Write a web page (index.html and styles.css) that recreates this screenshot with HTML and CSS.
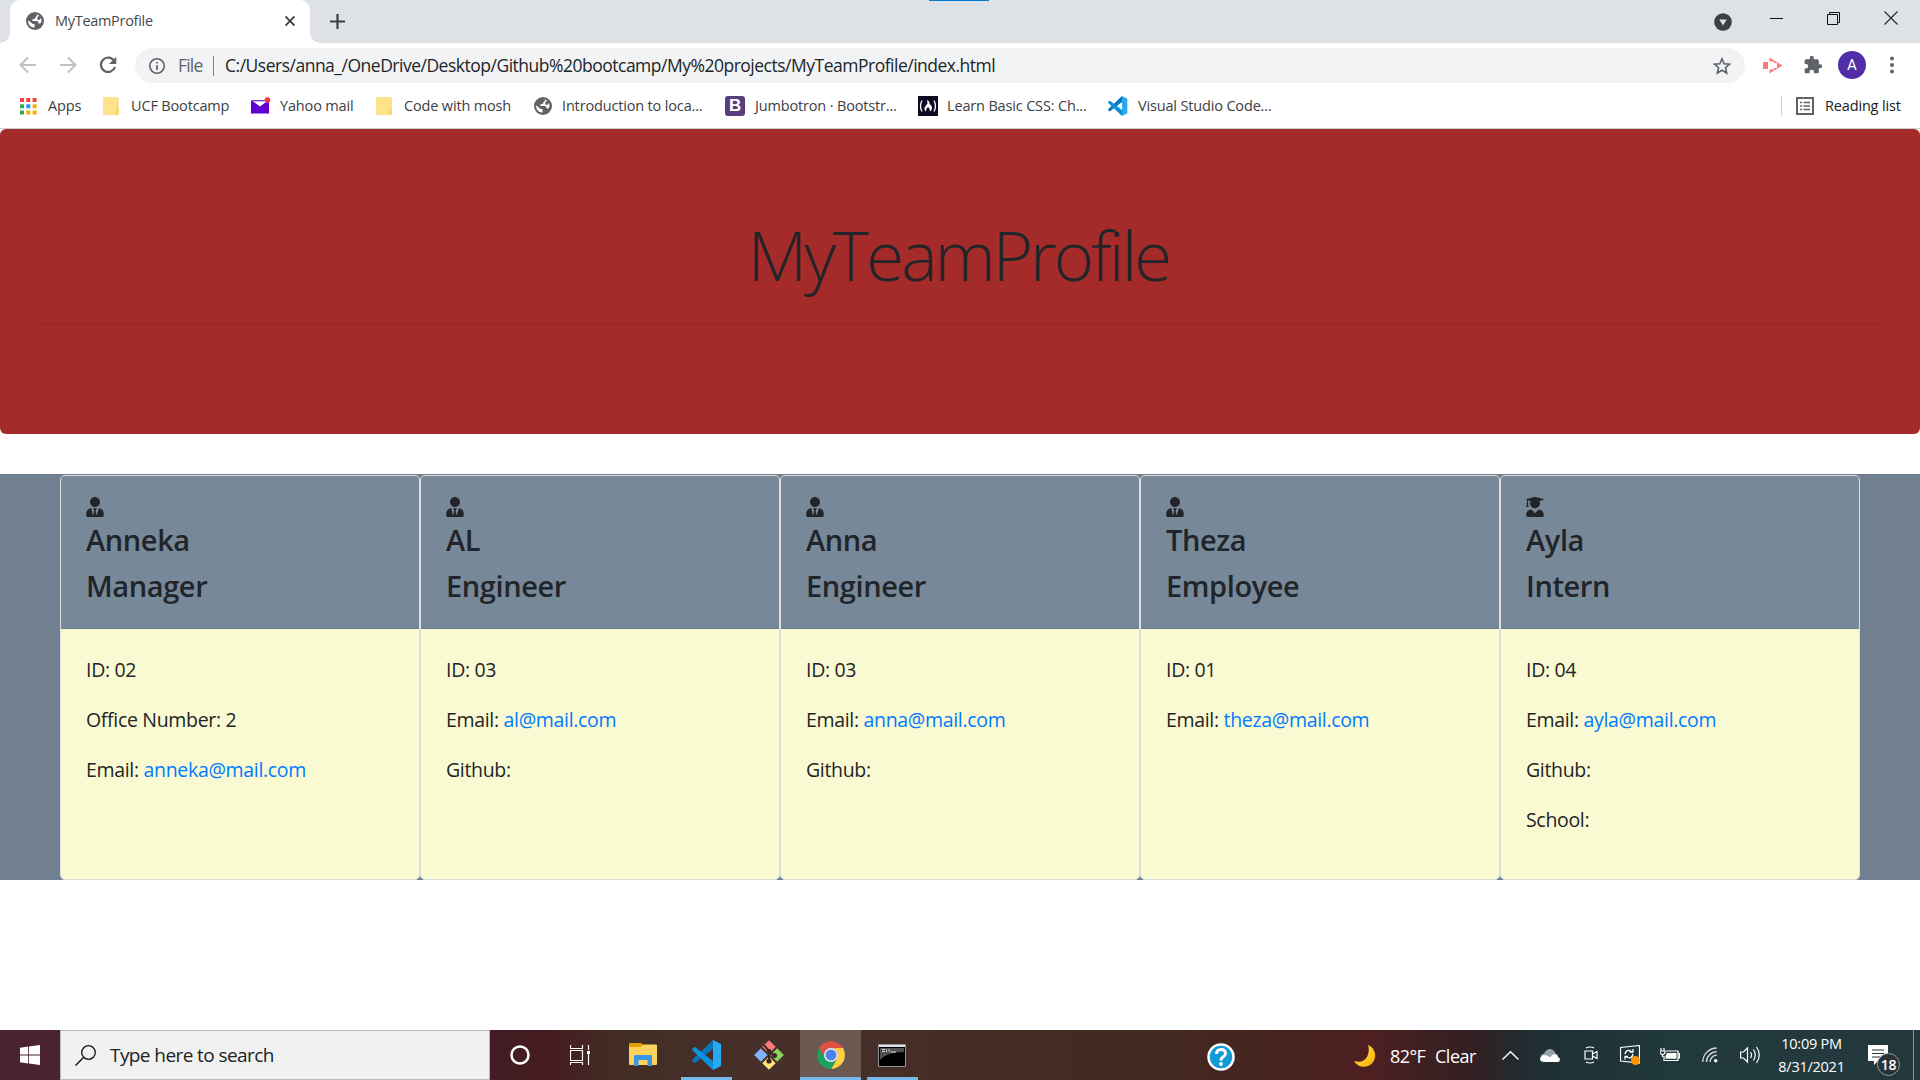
FILE: index.html
```html
<!DOCTYPE html>
<html lang="en">
<head>
<meta charset="utf-8">
<title>MyTeamProfile</title>
<link rel="stylesheet" href="styles.css">
</head>
<body>
<svg width="0" height="0" class="defs">
  <symbol id="globe" viewBox="0 0 18 18"><circle cx="9" cy="9" r="9" fill="#5f6368"/><path d="M2.200 8.200L6 11.500Q7 12 8.500 12V15.500Q4.500 15.500 2.700 12Q2 10.500 2.200 8.200ZM8 2.300H11.200Q11.300 4.800 9.300 5.300L8.800 7H6.500V9H11Q12.700 9.200 12.700 11.500H14.500Q16.200 9 15 5.800L13.700 7.800H11.300V5.500L13 3.500Q11 2 8 2.300Z" fill="#fff"/></symbol>
  <symbol id="folder" viewBox="0 0 16 18"><path d="M1 0H14Q15 0 15 1V12Q16 13 16 15V16Q16 18 14 18H1Q0 18 0 17V1Q0 0 1 0Z" fill="#ffe38c"/><path d="M15 1V12M13 18V14Q13 12 15 12Q16 13 15.500 16.500Q15 17.500 13 17.500" fill="none" stroke="#f5cf52"/></symbol>
  <symbol id="code" viewBox="0 0 30 30"><path d="M21 0L29 4V26L21 30Z" fill="#29a9f2"/><path d="M21 0V9L3 23Q2 23.500 0 21L1 19Z" fill="#0875bd"/><path d="M3 7Q1.500 7 0 9L1 11 21 30V21Z" fill="#0a91dc"/></symbol>
  <symbol id="tie" viewBox="0 0 448 512"><path fill="#212529" d="M224 256c70.700 0 128-57.300 128-128S294.700 0 224 0 96 57.300 96 128s57.300 128 128 128zm95.800 32.600L272 480l-32-136 32-56h-96l32 56-32 136-47.800-191.400C56.900 292 0 350.300 0 422.400V464c0 26.500 21.500 48 48 48h352c26.500 0 48-21.500 48-48v-41.600c0-72.100-56.900-130.400-128.200-133.800z"/></symbol>
  <symbol id="graduate" viewBox="0 0 448 512"><path fill="#212529" d="M319.400 320.600L224 416l-95.400-95.400C57.100 323.700 0 382.200 0 454.400v9.600c0 26.500 21.500 48 48 48h352c26.500 0 48-21.500 48-48v-9.600c0-72.200-57.100-130.700-128.600-133.800zM13.600 79.800l6.400 1.500v58.400c-7 4.200-12 11.500-12 20.300 0 8.400 4.600 15.400 11.100 19.700L3.500 242c-1.700 6.900 2.100 14 7.600 14h41.800c5.500 0 9.300-7.100 7.600-14l-15.600-62.300C51.400 175.400 56 168.400 56 160c0-8.800-5-16.100-12-20.300V87.100l66 15.900c-8.600 17.200-14 36.400-14 57 0 70.700 57.300 128 128 128s128-57.300 128-128c0-20.600-5.300-39.800-14-57l96.300-23.200c18.200-4.400 18.200-27.100 0-31.500l-190.400-46c-13-3.100-26.700-3.100-39.700 0L13.600 48.200c-18.100 4.400-18.100 27.200 0 31.600z"/></symbol>
</svg>

<header class="browser">
  <div class="tabstrip">
    <div class="tab">
      <svg class="globe"><use href="#globe"/></svg><span class="tab-title">MyTeamProfile</span>
      <svg class="close" viewBox="0 0 10 10"><path d="M0.500 0.500L9.500 9.500M9.500 0.500L0.500 9.500" stroke="#3c4043" stroke-width="1.900"/></svg>
    </div>
    <svg class="plus" viewBox="0 0 15 15"><path d="M7.500 0V15M0 7.500H15" stroke="#3c4043" stroke-width="2.200"/></svg>
    <div class="snap-edge"><i></i></div>
    <div class="window-controls">
      <svg width="18" height="18" viewBox="0 0 18 18"><circle cx="9" cy="9" r="8.800" fill="#3c4043"/><path d="M5.200 6.500H12.800L9 12.500Z" fill="#dee1e6"/></svg>
      <svg width="14" height="14" viewBox="0 0 14 14"><path d="M0 7.500H13" stroke="#111"/></svg>
      <svg width="14" height="14" viewBox="0 0 14 14"><path d="M.5 3.500H10.500V13.500H.5ZM2.500 3.500V1.500H12.500V11.500H10.500" fill="none" stroke="#111"/></svg>
      <svg width="14" height="14" viewBox="0 0 14 14"><path d="M.5.500L13.500 13.500M13.500.500L.5 13.500" stroke="#222" stroke-width="1.100"/></svg>
    </div>
  </div>

  <div class="toolbar">
    <svg class="nav" viewBox="0 0 18 18"><path d="M17 9H2M9 1.500L1.500 9 9 16.500" fill="none" stroke="#bdc0c4" stroke-width="2"/></svg>
    <svg class="nav" viewBox="0 0 18 18"><path d="M1 9H16M9 1.500L16.500 9 9 16.500" fill="none" stroke="#bdc0c4" stroke-width="2"/></svg>
    <svg class="nav" viewBox="0 0 18 18"><path d="M15 4.500A7.200 7.200 0 1 0 16 11" fill="none" stroke="#5f6368" stroke-width="2.200"/><path d="M17.300.700V8H10Z" fill="#5f6368"/></svg>
    <div class="omnibox">
      <svg class="info" viewBox="0 0 16 16"><circle cx="8" cy="8" r="7.200" fill="none" stroke="#5f6368" stroke-width="1.600"/><path d="M8 7V12M8 4V5.600" stroke="#5f6368" stroke-width="1.700"/></svg>
      <span class="scheme">File</span><i class="bar"></i><span class="url">C:/Users/anna_/OneDrive/Desktop/Github%20bootcamp/My%20projects/MyTeamProfile/index.html</span>
      <svg class="star" viewBox="0 0 18 18"><path d="M9 1.800L11.100 6.800 16.500 7.200 12.400 10.700 13.700 16 9 13.200 4.300 16 5.600 10.700 1.500 7.200 6.900 6.800Z" fill="none" stroke="#5f6368" stroke-width="1.600"/></svg>
    </div>
    <div class="actions">
      <svg width="20" height="17" viewBox="0 0 20 17"><path d="M0 5H5V12H0Z" fill="#ff7b7b"/><path d="M6.500 0.500L19.500 8.500 6.500 16.500V12.500H11V11H14V6H11V4.500H6.500Z" fill="#ff7b7b"/></svg>
      <svg width="20" height="20" viewBox="0 0 24 24"><path fill="#5f6368" d="M20.500 11H19V7c0-1.100-.9-2-2-2h-4V3.500a2.500 2.500 0 0 0-5 0V5H4c-1.100 0-2 .9-2 2v3.800h1.500a2.700 2.700 0 0 1 0 5.400H2V20c0 1.100.9 2 2 2h3.800v-1.500a2.700 2.700 0 0 1 5.400 0V22H17c1.100 0 2-.9 2-2v-4h1.500a2.500 2.500 0 0 0 0-5z"/></svg>
      <span class="avatar">A</span>
      <svg width="4" height="18" viewBox="0 0 4 18"><g fill="#5f6368"><circle cx="2" cy="2.500" r="2"/><circle cx="2" cy="9" r="2"/><circle cx="2" cy="15.500" r="2"/></g></svg>
    </div>
  </div>

  <nav class="bookmarks">
    <a class="bm apps"><svg width="17" height="17" viewBox="0 0 17 17"><path fill="#f44336" d="M0 0h4v4H0zM6.300 0h4v4h-4zM12.600 0h4v4h-4z"/><path fill="#34a853" d="M0 6.300h4v4H0zM0 12.600h4v4H0z"/><path fill="#2196f3" d="M6.300 6.300h4v4h-4z"/><path fill="#fbab09" d="M12.600 6.300h4v4h-4zM6.300 12.600h4v4h-4zM12.600 12.600h4v4h-4z"/></svg><span>Apps</span></a>
    <a class="bm ucf"><svg width="16" height="18"><use href="#folder"/></svg><span>UCF Bootcamp</span></a>
    <a class="bm yahoo"><svg width="20" height="18" viewBox="0 0 20 18"><path d="M0 3.500H18V16.500H0Z" fill="#6001d2"/><path d="M1.500 4L9 9.500 16.500 4V3.500H1.500Z" fill="#fff"/><path d="M1 3.800H17" stroke="#6001d2" stroke-width="1"/><circle cx="16.500" cy="3" r="2.800" fill="#ff333a"/></svg><span>Yahoo mail</span></a>
    <a class="bm mosh"><svg width="16" height="18"><use href="#folder"/></svg><span>Code with mosh</span></a>
    <a class="bm intro"><svg width="18" height="18"><use href="#globe"/></svg><span>Introduction to loca...</span></a>
    <a class="bm jumbo"><b class="bs-icon">B</b><span>Jumbotron · Bootstr...</span></a>
    <a class="bm learn"><svg width="20" height="20" viewBox="0 0 20 20"><path fill="#0a0a23" d="M0 0H20V20H0Z"/><path d="M4 4.500Q1 10 4 15.500M16 4.500Q19 10 16 15.500" fill="none" stroke="#fff" stroke-width="1.300"/><path d="M9 4Q12 5 11.500 8 14 9 14 12 14 14 12 15.500 12 12 10 11 8 12 8 15.500 6 14 6.500 11.500L9.500 7.500Z" fill="#fff"/></svg><span>Learn Basic CSS: Ch...</span></a>
    <a class="bm vsc"><svg width="20" height="20"><use href="#code"/></svg><span>Visual Studio Code...</span></a>
    <a class="bm reading"><svg width="18" height="18" viewBox="0 0 18 18"><path d="M1 1H17V17H1Z" fill="none" stroke="#5f6368" stroke-width="2"/><path d="M4 5.500H6M4 9H6M4 12.500H6M7.500 5.500H14M7.500 9H14M7.500 12.500H14" stroke="#5f6368" stroke-width="1.600"/></svg><span>Reading list</span></a>
  </nav>
</header>

<main>
  <section class="jumbotron"><h1>MyTeamProfile</h1><hr></section>
  <section class="team">
    <article class="card"><header><svg><use href="#tie"/></svg><h2>Anneka</h2><h2>Manager</h2></header><div class="body"><p>ID: 02</p><p>Office Number: 2</p><p>Email: <a>anneka@mail.com</a></p></div></article>
    <article class="card"><header><svg><use href="#tie"/></svg><h2>AL</h2><h2>Engineer</h2></header><div class="body"><p>ID: 03</p><p>Email: <a>al@mail.com</a></p><p>Github:</p></div></article>
    <article class="card"><header><svg><use href="#tie"/></svg><h2>Anna</h2><h2>Engineer</h2></header><div class="body"><p>ID: 03</p><p>Email: <a>anna@mail.com</a></p><p>Github:</p></div></article>
    <article class="card"><header><svg><use href="#tie"/></svg><h2>Theza</h2><h2>Employee</h2></header><div class="body"><p>ID: 01</p><p>Email: <a>theza@mail.com</a></p></div></article>
    <article class="card"><header><svg><use href="#graduate"/></svg><h2>Ayla</h2><h2>Intern</h2></header><div class="body"><p>ID: 04</p><p>Email: <a>ayla@mail.com</a></p><p>Github:</p><p>School:</p></div></article>
  </section>
</main>

<footer class="taskbar">
  <div class="start"><svg width="20" height="20" viewBox="0 0 20 20"><path fill="#fff" d="M0 2.800L8.200 1.600V9.500H0ZM9 1.500L20 0V9.500H9ZM0 10.400H8.200V18.400L0 17.200ZM9 10.400H20V20L9 18.500Z"/></svg></div>
  <div class="search"><svg width="21" height="21" viewBox="0 0 21 21"><circle cx="13.500" cy="7.500" r="6.800" fill="none" stroke="#111" stroke-width="1.300"/><path d="M8.500 12.500L.5 20.500" stroke="#111" stroke-width="1.400"/></svg><span>Type here to search</span></div>
  <div class="pins">
    <div class="pin w60"><svg width="20" height="20" viewBox="0 0 20 20"><circle cx="10" cy="10" r="8.500" fill="none" stroke="#fff" stroke-width="2.500"/></svg></div>
    <div class="pin w60"><svg width="20" height="20" viewBox="0 0 20 20"><path d="M.5 0V3.500H12.500V0M.5 5.500H12.500V15.500H.5ZM.5 20V17.500H12.500V20M18.500 0V5M18.500 9V20" fill="none" stroke="#fff" stroke-width="1.200"/><path d="M17 6H20V9H17Z" fill="#fff"/></svg></div>
    <div class="pin w66"><svg width="28" height="24" viewBox="0 0 28 24"><path d="M0 1Q0 0 1 0H12L14 1.500V5H0Z" fill="#e5a000"/><path d="M0 4H12L14 1.500H27Q28 1.500 28 2.500V21Q28 22 27 22H1Q0 22 0 21Z" fill="#ffd35c"/><path d="M5 23V13Q5 12 6 12H22Q23 12 23 13V23H18.500V17H9.500V23Z" fill="#3997e3"/></svg></div>
    <div class="pin w61 open inset"><svg width="30" height="30"><use href="#code"/></svg></div>
    <div class="pin w63"><svg width="30" height="30" viewBox="0 0 30 30"><g transform="rotate(45 15 15)"><path d="M4.500 4.500H14V14H4.500Z" fill="#ff7b7b"/><path d="M16 4.500H25.500V14H16Z" fill="#8bd45f"/><path d="M4.500 16H14V25.500H4.500Z" fill="#80b3ff"/><path d="M16 16H25.500V25.500H16Z" fill="#ffe57a"/></g><path d="M10 5L15 11V22M15 11L20 16" fill="none" stroke="#3a2b25" stroke-width="2"/><g fill="#3a2b25"><circle cx="15" cy="11" r="2.300"/><circle cx="15" cy="21" r="2.600"/><circle cx="20.500" cy="15.500" r="2.500"/></g></svg></div>
    <div class="pin w61 open active"><svg width="28" height="28" viewBox="0 0 28 28"><path d="M1.900 7A14 14 0 0 1 26.100 7H14A7 7 0 0 0 7.900 17.500Z" fill="#de5246"/><path d="M26.100 7A14 14 0 0 1 14 28L20.100 17.500A7 7 0 0 0 14 7Z" fill="#ffce44"/><path d="M14 28A14 14 0 0 1 1.900 7L7.900 17.500A7 7 0 0 0 20.100 17.500Z" fill="#1aa260"/><circle cx="14" cy="14" r="7" fill="#f1f1f1"/><circle cx="14" cy="14" r="5.500" fill="#4a83ee"/></svg></div>
    <div class="pin w61 open cmd"><svg width="28" height="23" viewBox="0 0 28 23"><path d="M.5.500H27.500V22.500H.5Z" fill="#000" stroke="#8f979c"/><path d="M1 1H27V3H1Z" fill="#dbe4e9"/><path d="M2 4H26V8Q9 8 2 16Z" fill="#505050"/><path d="M4 5.500H7M4 7.500H7M8.500 5.500V8M10.500 5L12 8M13 8H18" stroke="#ddd"/></svg></div>
  </div>
  <svg class="help" width="28" height="28" viewBox="0 0 28 28"><circle cx="14" cy="14" r="12.500" fill="#109bd7" stroke="#fff" stroke-width="2.500"/><path d="M9.500 11Q9.500 6.500 14 6.500T18.500 10.500Q18.500 12.500 16 14 14 15 14 17.500" fill="none" stroke="#fff" stroke-width="3"/><circle cx="14" cy="21" r="1.900" fill="#fff"/></svg>
  <div class="weather"><svg width="23" height="23" viewBox="0 0 23 23"><defs><linearGradient id="moon" y2="1"><stop stop-color="#ffe452"/><stop offset="1" stop-color="#ffad00"/></linearGradient></defs><path d="M14 0A11.300 11.300 0 1 1 0 16Q9 18.500 13 12 16 6 14 0Z" fill="url(#moon)"/></svg><span class="deg">82°F</span><span class="clear">Clear</span></div>
  <div class="tray">
    <svg width="17" height="9" viewBox="0 0 17 9"><path d="M.5 8.500L8.500.700 16.500 8.500" fill="none" stroke="#fff" stroke-width="1.400"/></svg>
    <svg width="20" height="13" viewBox="0 0 20 13"><path d="M1 9Q0 5 4 4.500 6 0 10.500 0 14 0.500 15.500 4.500L10 11H3Z" fill="#9aa3a6"/><path d="M3.500 13Q0 12.500 0 9.500 1 6.500 4 6.300 7 5.500 10 8.500 12.500 4.500 16 5 18 6 18 8 20 8.500 20 10.500T18 13Z" fill="#fff"/></svg>
    <svg width="14" height="18" viewBox="0 0 14 18"><path d="M1 5H8.500V13H1ZM8.500 8L13 5.500V12.500L8.500 10M2 2Q6 0 10 2M2 16Q6 18 10 16" fill="none" stroke="#fff" stroke-width="1.200"/></svg>
    <svg width="20" height="20" viewBox="0 0 20 20"><path d="M.5 2.500L19.500.500V18L.5 16Z" fill="none" stroke="#fff" stroke-width="1.200"/><path d="M5 9Q6 5 9 5.500L13 7M13 4V7H9.500M13 9Q12 14 8 12.500L5 11.500M5 14.500V11.500H8" fill="none" stroke="#fff" stroke-width="1.300"/><circle cx="15.500" cy="15.500" r="4.500" fill="#ff9800"/></svg>
    <svg width="20" height="14" viewBox="0 0 20 14"><path d="M6 3H18V12.500H4V8M18 5.500H19.500V10H18M0 3H5V5L3.500 6.500H1.500L0 5ZM1 0V3M4 0V3M2.500 6V9" fill="none" stroke="#fff" stroke-width="1.200"/><path d="M7 5H16.500V10.700H5.500V8Z" fill="#fff"/></svg>
    <svg width="16" height="16" viewBox="0 0 16 16"><path d="M.8 15A14 14 0 0 1 14.800 1M4.500 15A10.300 10.300 0 0 1 14.800 4.700M8 15A6.800 6.800 0 0 1 14.800 8.200" fill="none" stroke="#d5dbdc" stroke-width="1.300"/><circle cx="13.700" cy="13.800" r="1.700" fill="#fff"/></svg>
    <svg width="21" height="18" viewBox="0 0 21 18"><path d="M.6 6H3.500L7.500 2V16L3.500 12H.6ZM10.500 6Q12.500 9 10.500 12M13.500 3.500Q17 9 13.500 14.500M16.500 1Q22 9 16.500 17" fill="none" stroke="#fff" stroke-width="1.200"/></svg>
  </div>
  <div class="clock"><span>10:09 PM</span><span>8/31/2021</span></div>
  <div class="notice"><svg width="20" height="20" viewBox="0 0 20 20"><path d="M0 0H20V16H10L6 20V16H0Z" fill="#fff"/><path d="M4 5H16M4 8.500H16M4 12H12" stroke="#26373b" stroke-width="1.100"/></svg><span class="badge">18</span></div>
</footer>
</body>
</html>
```
FILE: styles.css
```css
* { box-sizing: border-box; }
body { margin: 0; width: 1920px; height: 1080px; overflow: hidden; display: flex; flex-direction: column; background: #fff; color: #212529; font-family: "Open Sans", "Noto Sans", sans-serif; }
svg { flex: none; display: block; }
span { white-space: nowrap; }
.defs { display: none; }

.browser { height: 129px; border-bottom: 1px solid #cdd0d5; }
.tabstrip { height: 43px; background: #dee1e6; display: flex; align-items: center; position: relative; }
.tab { position: relative; margin-left: 10px; width: 300px; height: 43px; padding: 0 15px 1px 16px; background: #fff; border-radius: 10px 10px 0 0; display: flex; align-items: center; }
.tab::before, .tab::after { content: ""; position: absolute; bottom: 0; width: 10px; height: 10px; }
.tab::before { left: -10px; background: radial-gradient(circle at 0 0, #dee1e6 9.5px, #fff 10px); }
.tab::after { right: -10px; background: radial-gradient(circle at 100% 0, #dee1e6 9.5px, #fff 10px); }
.globe { width: 18px; height: 18px; }
.tab-title { margin-left: 11px; padding-bottom: 1px; font-size: 14.5px; color: #45494d; letter-spacing: -.3px; }
.close { width: 10px; height: 10px; margin-left: auto; }
.plus { width: 15px; height: 15px; margin-left: 20px; }
.snap-edge { position: absolute; left: 809px; top: 0; width: 301px; height: 1px; background: #e6e6e6; }
.snap-edge i { display: block; margin-left: 120px; width: 60px; height: 1px; background: #0078d7; }
.window-controls { margin-left: auto; align-self: flex-start; display: flex; align-items: flex-start; padding: 11px 22px 0 0; gap: 43px; }
.window-controls svg:first-child { margin: 2px -5px 0 0; }
.toolbar { height: 44px; display: flex; align-items: center; padding-left: 19px; }
.nav { width: 18px; height: 18px; margin-right: 22px; }
.nav:nth-child(3) { margin-right: 18px; }
.omnibox { width: 1610px; height: 35px; margin-top: 1px; background: #f1f3f4; border-radius: 18px; display: flex; align-items: center; padding: 0 14px; font-size: 17.5px; }
.info { width: 16px; height: 16px; }
.scheme { margin-left: 13px; padding-bottom: 1px; width: 26px; color: #5f6368; letter-spacing: -.8px; }
.bar { width: 1px; height: 20px; background: #80868b; margin: 0 11px 0 9px; }
.url { padding-bottom: 1px; letter-spacing: -.495px; }
.star { width: 18px; height: 18px; margin-left: auto; }
.actions { display: flex; align-items: center; margin-left: 18px; }
.actions > :nth-child(2) { margin-left: 20px; }
.avatar { width: 28px; height: 28px; margin: 0 24px 0 15px; border-radius: 50%; background: #512da8; color: #fff; font: 15px/28px Roboto, sans-serif; text-align: center; }
.bookmarks { height: 38px; display: flex; padding-left: 20px; font-size: 14.5px; color: #3c4043; }
.bm { display: flex; align-items: center; gap: 11px; letter-spacing: -.16px; height: 38px; }
.bm span { padding-bottom: 2px; }
.apps { width: 83px; }
.ucf { width: 148px; gap: 12px; }
.yahoo { width: 125px; gap: 9px; }
.mosh { width: 158px; gap: 12px; }
.intro { width: 191px; gap: 10px; }
.jumbo { width: 193px; gap: 10px; }
.learn { width: 190px; gap: 9px; }
.vsc { gap: 10px; }
.bs-icon { width: 20px; height: 20px; border-radius: 3px; background: #563d7c; color: #fff; font: bold 17px/20px "Liberation Sans", sans-serif; text-align: center; }
.reading { position: relative; width: 109px; margin: 0 15px 0 auto; color: #202124; }
.reading::before { content: ""; position: absolute; left: -15px; top: 9px; height: 20px; width: 1px; background: #cfd1d4; }

main { height: 901px; }
.jumbotron { height: 305px; background: #a52a2a; border-radius: 6px; padding: 83px 40px 0; }
h1 { margin: 0; font-weight: 300; font-size: 69px; line-height: 84px; text-align: center; letter-spacing: -3px; text-indent: -3px; }
hr { border: 0; border-top: 1px solid rgba(0,0,0,.1); margin: 27px 0 0; }
.team { margin-top: 40px; height: 406px; padding: 1px 60px 0; background: #708090; display: grid; grid-template-columns: repeat(5, 360px); }
.card { border: 1px solid #dedede; border-radius: 5px; overflow: hidden; height: 405px; background: #fafad2; }
.card header { height: 153px; border-bottom: 1px solid #6b7b8a; background: #778899; padding: 21px 25px 0; }
.card header svg { width: 18px; height: 20px; }
h2 { margin: 0 0 10px; font-size: 29px; font-weight: 600; line-height: 36px; letter-spacing: -.4px; }
.card header svg + h2 { margin-top: 5px; }
.body { padding: 26px 25px; font-size: 19.5px; line-height: 30px; letter-spacing: -.32px; }
.body p { margin: 0 0 20px; }
.body a { color: #007bff; }

.taskbar { height: 50px; display: flex; align-items: center; background: linear-gradient(90deg, #4b2430 0, #421d23 490px, #451c20 550px, #432e26 625px, #47302a 800px, #432a20 1150px, #47221f 1300px, #4e1f21 1370px, #302022 1475px, #1e3035 1540px, #213a3e 1700px, #23383d 1920px); color: #fff; }
.start { width: 60px; padding-left: 20px; }
.search { width: 430px; height: 50px; background: #f1f1f1; border: 1px solid #bbb; display: flex; align-items: center; padding-left: 14px; color: #222; font-size: 19px; }
.search span { margin-left: 14px; letter-spacing: -.58px; }
.pins { display: flex; height: 50px; width: 440px; }
.pin { height: 50px; display: flex; align-items: center; justify-content: center; position: relative; flex: none; }
.w60 { width: 60px; }
.w61 { width: 61px; }
.w63 { width: 63px; }
.w66 { width: 66px; }
.pin.open::after { content: ""; position: absolute; bottom: 0; left: 0; right: 0; height: 3px; background: #76b9ed; }
.pin.inset::after { left: 5px; right: 5px; }
.pin.cmd::after { left: 6px; right: 4px; }
.active { background: #6b5951; }
.help { margin-left: 277px; margin-top: 3px; }
.weather { margin-left: 119px; display: flex; align-items: center; font-size: 18px; padding-top: 2px; }
.deg { margin-left: 13px; width: 45px; letter-spacing: -.6px; }
.clear { width: 67px; letter-spacing: -.5px; }
.tray { display: flex; align-items: center; width: 275px; }
.tray svg:nth-child(2) { margin-left: 21px; }
.tray svg:nth-child(3) { margin-left: 24px; }
.tray svg:nth-child(4) { margin-left: 22px; }
.tray svg:nth-child(5) { margin-left: 20px; }
.tray svg:nth-child(6) { margin-left: 22px; }
.tray svg:nth-child(7) { margin-left: 22px; }
.clock { width: 69px; display: flex; flex-direction: column; align-items: center; font-size: 14.5px; line-height: 23px; letter-spacing: -.25px; }
.notice { position: relative; margin-left: 22px; height: 50px; width: 46px; padding-top: 15px; border-right: 1px solid #889598; }
.badge { position: absolute; left: 9px; top: 23px; width: 23px; height: 23px; border: 1px solid #929a9c; border-radius: 50%; background: #293335; font-size: 14px; font-weight: 600; line-height: 21px; text-align: center; letter-spacing: -.3px; }
```
